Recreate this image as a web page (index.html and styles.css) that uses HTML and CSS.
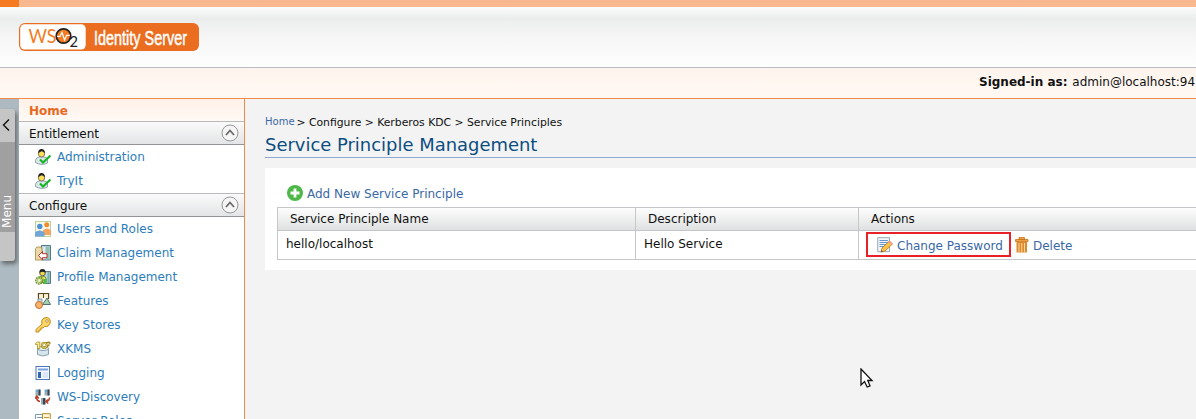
FILE: index.html
```html
<!DOCTYPE html>
<html lang="en">
<head>
<meta charset="utf-8">
<title>WSO2 Identity Server</title>
<link rel="stylesheet" href="styles.css">
</head>
<body>
<div class="page">
  <div class="strip"><span class="strip-dark"></span></div>
  <header class="header">
    <svg class="logo" width="180" height="28" viewBox="0 0 180 28">
      <rect width="180" height="28" rx="6" fill="#ea6d20"/>
      <rect x="1.2" y="1.2" width="65.5" height="25.400" rx="4.5" fill="#fff"/>
      <text x="9.500" y="19.500" class="logo-ws" textLength="28" lengthAdjust="spacingAndGlyphs">WS</text>
      <circle cx="44.500" cy="13" r="7.2" fill="#f47b20" stroke="#222" stroke-width="1.8"/>
      <path d="M38 13.400h3l2-4 2.500 7.500 2.200-4.500h3" fill="none" stroke="#fff" stroke-width="1.200"/>
      <text x="50.500" y="23.500" class="logo-two" textLength="8.500" lengthAdjust="spacingAndGlyphs">2</text>
      <text x="75" y="21.500" class="logo-name" textLength="93" lengthAdjust="spacingAndGlyphs">Identity Server</text>
    </svg>
  </header>
  <div class="userbar"><b>Signed-in as:</b> <span class="user">admin@localhost:94</span></div>
  <div class="body">
    <div class="rail">
      <div class="tabs">
        <div class="tab-arrow"><svg width="8" height="14" viewBox="0 0 8 14"><path d="M7 1.500 1.500 7 7 12.500" fill="none" stroke="#111" stroke-width="1.400"/></svg></div>
        <div class="tab-menu"><span>Menu</span></div>
        <div class="tab-end"></div>
      </div>
    </div>
    <nav class="side">
      <div class="home">Home</div>
      <div class="group"><span>Entitlement</span><svg width="18" height="18" viewBox="0 0 18 18"><circle cx="9" cy="9" r="8" fill="#f5f5f5" stroke="#999"/><path d="M5 11l4-4.500 4 4.500" fill="none" stroke="#666" stroke-width="1.700"/></svg></div>
      <ul>
        <li><svg viewBox="0 0 16 16"><path d="M.5 13.500Q0 9 4 8h5q3 0 3.500 3v3q-6 3-12-.5z" fill="#dbe7ec" stroke="#8ba2ad"/><circle cx="6.500" cy="4.800" r="3.200" fill="#f8df55" stroke="#555" stroke-width=".7"/><path d="M3.200 4.500Q3 0 6.500 0T10 4.500Q8 2 6.500 2.300T3.200 4.500z" fill="#222"/><path d="M5 10.500l3 3 7.500-7" fill="none" stroke="#18b522" stroke-width="2.200"/></svg>Administration</li>
        <li><svg viewBox="0 0 16 16"><path d="M.5 13.500Q0 9 4 8h5q3 0 3.500 3v3q-6 3-12-.5z" fill="#dbe7ec" stroke="#8ba2ad"/><circle cx="6.500" cy="4.800" r="3.200" fill="#f8df55" stroke="#555" stroke-width=".7"/><path d="M3.200 4.500Q3 0 6.500 0T10 4.500Q8 2 6.500 2.300T3.200 4.500z" fill="#222"/><path d="M5 10.500l3 3 7.500-7" fill="none" stroke="#18b522" stroke-width="2.200"/></svg>TryIt</li>
      </ul>
      <div class="group"><span>Configure</span><svg width="18" height="18" viewBox="0 0 18 18"><circle cx="9" cy="9" r="8" fill="#f5f5f5" stroke="#999"/><path d="M5 11l4-4.500 4 4.500" fill="none" stroke="#666" stroke-width="1.700"/></svg></div>
      <ul>
        <li><svg viewBox="0 0 16 16"><rect x=".5" y=".5" width="15" height="15" fill="#f7faea" stroke="#bdd2a0"/><path d="M8 14V9.500q4-4 8 0V14z" fill="#f3a45f"/><circle cx="11.700" cy="3.800" r="2.500" fill="#f08a2c"/><path d="M0 15.500v-4q4.500-4 9.500 0v4z" fill="#6fa5d8"/><circle cx="4.800" cy="5.500" r="2.700" fill="#4c91d4"/></svg>Users and Roles</li>
        <li><svg viewBox="0 0 16 16"><path d="M6.500.5h9v14.500h-9z" fill="#b9d3df" stroke="#54788c"/><path d="M9 2v12" stroke="#fff"/><path d="M11 1.500h3.500v13H11z" fill="#8fbfae"/><path d="M.5 3.500 2 2h4l1 2V15H.5z" fill="#ecd9a8" stroke="#b79a5a"/><path d="M3.500 10.500l4-4v2.200H12v4H7.500V15z" fill="#fff" stroke="#bd2f2a"/></svg>Claim Management</li>
        <li><svg viewBox="0 0 16 16"><path d="M8.500 2.500h7v12h-7z" fill="#b9d3df" stroke="#54788c"/><path d="M13.500 3v11" stroke="#7bb0a4" stroke-width="2"/><path d="M4 13V9q1-2 3.500-2T11 9v5z" fill="#d9df64" stroke="#718f29"/><circle cx="7.500" cy="4" r="2.800" fill="#f4d84c" stroke="#333" stroke-width=".7"/><path d="M4.500 4Q4 0 7.500 0t3 4Q7.500 1.500 4.500 4z" fill="#222"/><circle cx="4.300" cy="11.500" r="3.500" fill="none" stroke="#6f9132" stroke-width="1.600" stroke-dasharray="1.800 .7"/><circle cx="4.300" cy="11.500" r="2" fill="#edf5ca" stroke="#9bb950"/><path d="M9 15v-5h2.500v5z" fill="#4dbb43"/></svg>Profile Management</li>
        <li><svg viewBox="0 0 16 16"><path d="M3.500 7V.7h10V6M8.500.7V5" fill="none" stroke="#5c461e" stroke-width="1.300"/><path d="M4.200 1.300h3.700v4H4.200zM9 1.300h4v4H9z" fill="#fbf1d0"/><path d="M7.500 11.500H15.500L12 5z" fill="#a5cfaf" stroke="#53736e"/><path d="M3 6h4v6H3z" fill="#d0dbe4" stroke="#899baa"/><circle cx="4" cy="12" r="3.500" fill="#f7b26d" stroke="#c16f2c"/></svg>Features</li>
        <li><svg viewBox="0 0 16 16"><path d="M1 12.500 7 7Q5.500 3 9 1q4-2 6 1.500 1.500 4-2 6.500-2 1-3.500.5L8 11H6v2H4v2H1z" fill="#fbd568" stroke="#c28a17"/><circle cx="12" cy="4" r="1.300" fill="#fff" stroke="#a77715" stroke-width=".7"/></svg>Key Stores</li>
        <li><svg viewBox="0 0 16 16"><path d="M2.500 7v6.500q5 3 11 0V7z" fill="#d5e5ec" stroke="#8ba1ab"/><ellipse cx="8" cy="7.500" rx="5.500" ry="2" fill="#edf5f7" stroke="#8ba1ab"/><path d="M.5 2.500 2.500 1h2.300v6.500H2.500V3.500H.5z" fill="#fbec96" stroke="#a38d1c" stroke-width=".8"/><circle cx="9.300" cy="4.500" r="2.400" fill="none" stroke="#9b8412" stroke-width="2"/><path d="M10 3q3-3 5.500-.5M11 6.500l3.500-3" fill="none" stroke="#9b8412" stroke-width="1.500"/><circle cx="9.300" cy="4.500" r="2.400" fill="none" stroke="#f8e67a" stroke-width=".8"/></svg>XKMS</li>
        <li><svg viewBox="0 0 16 16"><rect x="1" y="1.500" width="13.500" height="13" fill="#f7faff" stroke="#4d76b8"/><path d="M3 3.500h10v2H3z" fill="#7ba2dc"/><path d="M3 7h3v6H3z" fill="#2f65b4"/><path d="M7.500 7H13v6H7.500z" fill="#dce7f6"/></svg>Logging</li>
        <li><svg viewBox="0 0 16 16"><path d="M.5.5h5v6h-5zM9.500.5h5v6h-5zM6 9h5v6.500H6z" fill="#9aacb5"/><path d="M4.500.5v6M13.500.5v6M9 9v6.500" stroke="#36464f" stroke-width="2"/><path d="M1 2h2M10 2h2" stroke="#4baae8" stroke-width="1.500"/><path d="M5 12.500Q1.500 12 1.500 8M0 9.500 1.800 7l2 2.500M11 12.500q3.500-.5 3.500-4M12.800 10.500l-2 2 2.500 2" fill="none" stroke="#b83c27" stroke-width="1.500"/></svg>WS-Discovery</li>
        <li><svg viewBox="0 0 16 16"><path d="M.5 1.500h9v12h-9z" fill="#fff" stroke="#7c98ac"/><path d="M2 4.500h6M2 7h5M2 9.500h5" stroke="#7c98ac"/><path d="M7.500.7h7.800v13H7.500z" fill="#fff7d9" stroke="#b88b2b"/><path d="M9 4.500h5M9 7h5" stroke="#bb953f"/></svg>Server Roles</li>
      </ul>
    </nav>
    <main class="main">
      <div class="crumbs"><a>Home</a> &gt; Configure &gt; Kerberos KDC &gt; Service Principles</div>
      <h1>Service Principle Management</h1>
      <section class="panel">
        <div class="add"><svg width="16" height="16" viewBox="0 0 16 16"><circle cx="8" cy="8" r="8" fill="#4db848"/><path d="M8 3.500v9M3.500 8h9" stroke="#fff" stroke-width="2.800"/></svg><span>Add New Service Principle</span></div>
        <div class="table">
          <div class="row head"><div>Service Principle Name</div><div>Description</div><div>Actions</div></div>
          <div class="row"><div>hello/localhost</div><div>Hello Service</div>
            <div class="actions">
              <a class="change"><svg width="16" height="16" viewBox="0 0 16 16"><path d="M.7.700h11.800v14H.7z" fill="#f2f6fb" stroke="#9aa8b6"/><path d="M2.500 3.500H11M2.500 5.500H11M2.500 7.500H9M2.500 9.500H7" stroke="#6695cd"/><path d="M4 15l1-4 7.500-7 3 3-7.500 7z" fill="#f8c34a" stroke="#b9731b" stroke-width=".8"/><path d="M4 15l.5-1.800L6 14.500z" fill="#554532"/><path d="M12.300 4.500l3 3" stroke="#f29aa0" stroke-width="1.500"/></svg><span>Change Password</span></a>
              <a class="delete"><svg width="14" height="16" viewBox="0 0 14 16"><path d="M1.500 5h10.500v10.500H1.500z" fill="#dc8a2c"/><path d="M4 6v9M6.800 6v9M9.500 6v9" stroke="#ffd9a1"/><path d="M.5 2.500h12.500v2H.5zM4 .5h5.500v2H4z" fill="#f0a047" stroke="#c87517" stroke-width=".8"/></svg><span>Delete</span></a>
            </div>
          </div>
        </div>
      </section>
    </main>
  </div>
  <svg class="cursor" width="14" height="21" viewBox="0 0 14 21"><path d="M1 1v16l3.500-3.500L7.200 19l2.800-1.200L7.800 12.500h4.200z" fill="#fff" stroke="#111" stroke-width="1.300"/></svg>
</div>
</body>
</html>
```
FILE: styles.css
```css
* { box-sizing: border-box; }
body { margin: 0; font: 12px/16px "DejaVu Sans", sans-serif; color: #111; }
.page { position: relative; width: 1196px; height: 419px; overflow: hidden; display: flex; flex-direction: column; background: #f3f3f3; }
.strip { flex: none; height: 7px; background: #f9b78e; display: flex; }
.strip-dark { width: 19px; background: #f47b20; }
.header { flex: none; height: 61px; padding: 16px 19px; background: linear-gradient(#fafafa, #ebeded 12px, #f6f6f6 30px, #fefefe); border-bottom: 1px solid #b9bdc0; }
.logo { display: block; }
.logo-ws { font: 20px "Lato", sans-serif; fill: #f47b20; }
.logo-two { font: 15px "Lato", sans-serif; fill: #222; }
.logo-name { font: 20px "Liberation Sans Narrow", "Liberation Sans", sans-serif; fill: #fff; stroke: #fff; stroke-width: .5px; }
.userbar { flex: none; height: 31px; padding: 6px 0 0 979px; white-space: nowrap; background: linear-gradient(#fef4ed, #fff9f4); border-bottom: 1px solid #f18b4b; }
.user { margin-left: 1px; }
.body { flex: 1; min-height: 0; display: flex; }
.rail { flex: none; width: 19px; background: #adbac1; padding-top: 10px; }
.tabs { width: 15px; height: 152px; border-radius: 0 3px 3px 0; background: #c5c5c5; box-shadow: 2px 3px 4px rgba(60,60,60,.65); display: flex; flex-direction: column; }
.tab-arrow { height: 33px; padding: 9px 0 0 2px; }
.tab-menu { height: 90px; background: #a0a0a0; display: flex; align-items: flex-end; padding-bottom: 4px; color: #fff; }
.tab-menu span { writing-mode: vertical-rl; transform: rotate(180deg); line-height: 15px; }
.side { flex: none; width: 226px; background: #fff; border-right: 1px solid #f18b4b; color: #2d7dbd; }
.home { height: 22px; padding: 4px 10px; font-weight: bold; color: #e8691e; background: linear-gradient(#fef1e8, #fff9f4); }
.group { height: 24px; padding: 0 5px 0 10px; display: flex; align-items: center; justify-content: space-between; color: #111; border-top: 1px solid #b9b9bd; border-bottom: 1px solid #929297; background: linear-gradient(#fafafa, #e3e5e6); }
.group span { padding-top: 2px; }
ul { list-style: none; margin: 0; padding: 0; }
li { height: 24px; display: flex; align-items: center; gap: 6px; padding-left: 16px; }
li svg { width: 16px; height: 16px; }
.main { flex: 1; min-width: 0; padding: 15px 0 0 20px; }
.crumbs { height: 19px; padding-top: 1px; font-size: 10.8px; }
.crumbs a { font-size: 10px; color: #3c69a5; position: relative; top: -1px; margin-right: -1.5px; }
h1 { margin: 0; height: 25px; font-size: 17.95px; line-height: 23px; font-weight: normal; color: #0b4d81; border-bottom: 1px solid #8faad1; }
.panel { height: 102px; margin-top: 10px; padding: 17px 0 0 12px; background: #fff; }
.add { height: 22px; padding-left: 10px; display: flex; gap: 4px; color: #3a68a5; }
.add span { padding-top: 1px; }
.actions span { padding-top: 2px; }
.table { border: 1px solid #c5c6ca; border-right: 0; }
.row { display: grid; grid-template-columns: 357px 223px 1fr; height: 28px; }
.row > div { padding: 5px 8px; border-left: 1px solid #c5c6ca; }
.row > div:first-child { border-left: 0; }
.head { height: 23px; border-bottom: 1px solid #c5c6ca; background: linear-gradient(#fdfdfd, #dfe1e1); }
.head > div { padding: 3px 12px; }
.row > .actions { display: flex; align-items: flex-start; gap: 4px; padding: 1px 7px; color: #3a68a5; }
.change, .delete { display: flex; align-items: center; gap: 4px; white-space: nowrap; height: 25px; }
.change { width: 145px; border: 2px solid #e8202a; padding-left: 9px; }
.cursor { position: absolute; left: 860px; top: 368px; }
```
